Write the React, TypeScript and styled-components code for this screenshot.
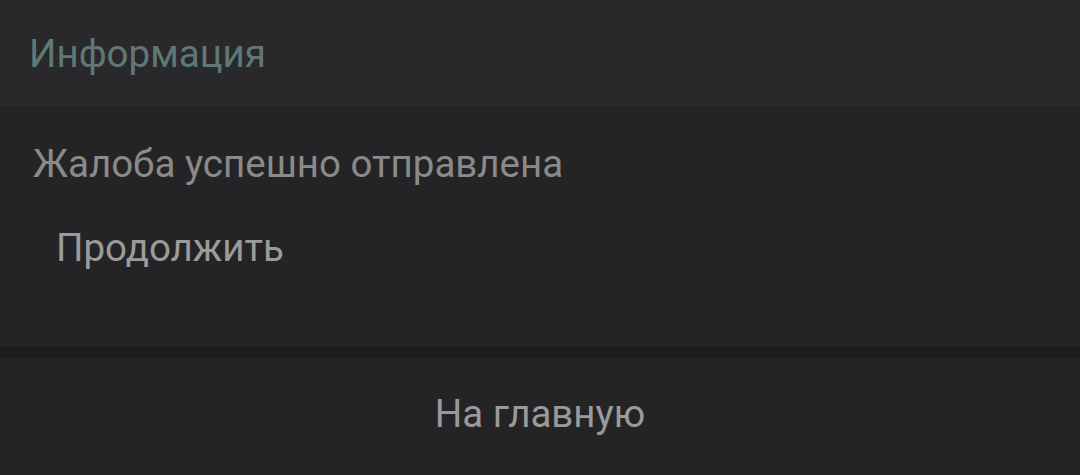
import React from 'react'
import styled, { createGlobalStyle } from 'styled-components';

const GlobalStyle = createGlobalStyle`
  html, body {
    margin: 0;
    padding: 0;
    background-color: #242426;
    font-family: Roboto, "Noto Sans", sans-serif;
  }
`

const Screen = styled.div`
  width: 1080px;
  height: 475px;
  display: flex;
  flex-direction: column;
  overflow: hidden;
  background-color: #242426;
`

const Header = styled.div`
  height: 106px;
  display: flex;
  align-items: center;
  padding-left: 29px;
  background-color: #29292b;
`

const Title = styled.h2`
  margin: 0;
  font-weight: 400;
  font-size: 38.5px;
  color: #5f7877;
`

const Body = styled.div`
  height: 241px;
  display: flex;
  flex-direction: column;
  padding-left: 33px;
  padding-top: 35px;
  box-sizing: border-box;
`

const Message = styled.p`
  margin: 0;
  font-size: 38.5px;
  color: #8a8a8a;
`

const TextButton = styled.button`
  align-self: flex-start;
  margin-top: 39px;
  margin-left: 23px;
  padding: 0;
  border: none;
  background: none;
  font-family: inherit;
  font-size: 38.5px;
  color: #9b9b9b;
`

const Divider = styled.div`
  height: 11px;
  background-color: #1d1d1d;
`

const Footer = styled.div`
  flex: 1;
  display: flex;
  align-items: center;
  justify-content: center;
  padding-bottom: 6px;
`

const HomeButton = styled.button`
  padding: 0;
  border: none;
  background: none;
  font-family: inherit;
  font-size: 38.5px;
  color: #9a9a9a;
`

function App() {
  return (
    <>
      <GlobalStyle />
      <Screen>
        <Header>
          <Title>Информация</Title>
        </Header>
        <Body>
          <Message>Жалоба успешно отправлена</Message>
          <TextButton>Продолжить</TextButton>
        </Body>
        <Divider />
        <Footer>
          <HomeButton>На главную</HomeButton>
        </Footer>
      </Screen>
    </>
  )
}

export default App;
